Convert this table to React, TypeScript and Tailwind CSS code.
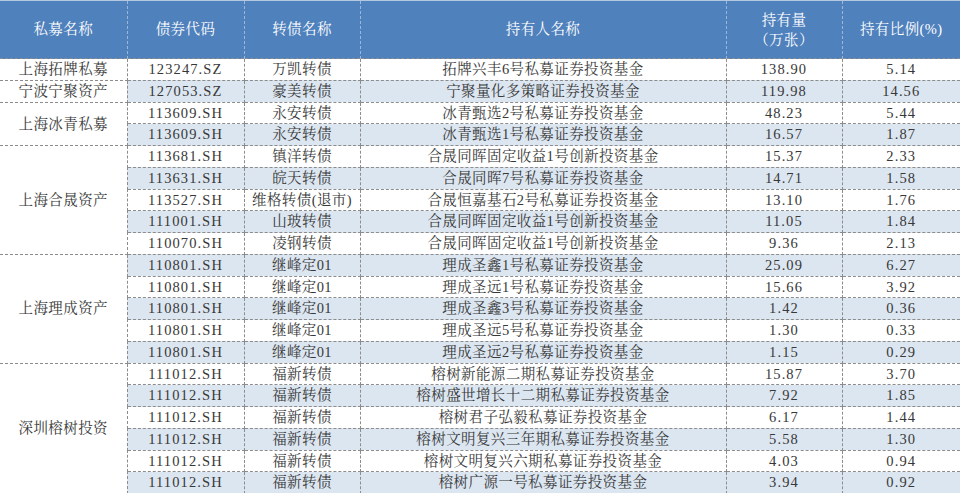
import React from "react";

interface Holding {
  code: string;
  bond: string;
  holder: string;
  amount: string;
  ratio: string;
}

interface Group {
  name: string;
  rows: Holding[];
}

const groups: Group[] = [
  {
    name: "上海拓牌私募",
    rows: [{ code: "123247.SZ", bond: "万凯转债", holder: "拓牌兴丰6号私募证券投资基金", amount: "138.90", ratio: "5.14" }],
  },
  {
    name: "宁波宁聚资产",
    rows: [{ code: "127053.SZ", bond: "豪美转债", holder: "宁聚量化多策略证券投资基金", amount: "119.98", ratio: "14.56" }],
  },
  {
    name: "上海冰青私募",
    rows: [
      { code: "113609.SH", bond: "永安转债", holder: "冰青甄选2号私募证券投资基金", amount: "48.23", ratio: "5.44" },
      { code: "113609.SH", bond: "永安转债", holder: "冰青甄选1号私募证券投资基金", amount: "16.57", ratio: "1.87" },
    ],
  },
  {
    name: "上海合晟资产",
    rows: [
      { code: "113681.SH", bond: "镇洋转债", holder: "合晟同晖固定收益1号创新投资基金", amount: "15.37", ratio: "2.33" },
      { code: "113631.SH", bond: "皖天转债", holder: "合晟同晖7号私募证券投资基金", amount: "14.71", ratio: "1.58" },
      { code: "113527.SH", bond: "维格转债(退市)", holder: "合晟恒嘉基石2号私募证券投资基金", amount: "13.10", ratio: "1.76" },
      { code: "111001.SH", bond: "山玻转债", holder: "合晟同晖固定收益1号创新投资基金", amount: "11.05", ratio: "1.84" },
      { code: "110070.SH", bond: "凌钢转债", holder: "合晟同晖固定收益1号创新投资基金", amount: "9.36", ratio: "2.13" },
    ],
  },
  {
    name: "上海理成资产",
    rows: [
      { code: "110801.SH", bond: "继峰定01", holder: "理成圣鑫1号私募证券投资基金", amount: "25.09", ratio: "6.27" },
      { code: "110801.SH", bond: "继峰定01", holder: "理成圣远1号私募证券投资基金", amount: "15.66", ratio: "3.92" },
      { code: "110801.SH", bond: "继峰定01", holder: "理成圣鑫3号私募证券投资基金", amount: "1.42", ratio: "0.36" },
      { code: "110801.SH", bond: "继峰定01", holder: "理成圣远5号私募证券投资基金", amount: "1.30", ratio: "0.33" },
      { code: "110801.SH", bond: "继峰定01", holder: "理成圣远2号私募证券投资基金", amount: "1.15", ratio: "0.29" },
    ],
  },
  {
    name: "深圳榕树投资",
    rows: [
      { code: "111012.SH", bond: "福新转债", holder: "榕树新能源二期私募证券投资基金", amount: "15.87", ratio: "3.70" },
      { code: "111012.SH", bond: "福新转债", holder: "榕树盛世增长十二期私募证券投资基金", amount: "7.92", ratio: "1.85" },
      { code: "111012.SH", bond: "福新转债", holder: "榕树君子弘毅私募证券投资基金", amount: "6.17", ratio: "1.44" },
      { code: "111012.SH", bond: "福新转债", holder: "榕树文明复兴三年期私募证券投资基金", amount: "5.58", ratio: "1.30" },
      { code: "111012.SH", bond: "福新转债", holder: "榕树文明复兴六期私募证券投资基金", amount: "4.03", ratio: "0.94" },
      { code: "111012.SH", bond: "福新转债", holder: "榕树广源一号私募证券投资基金", amount: "3.94", ratio: "0.92" },
    ],
  },
];

const cell = "border border-dashed border-[#8c8c8c] text-center align-middle p-0 leading-none";
const head = "border-x border-dashed border-x-[#9fb6d6] text-center align-middle font-normal p-0";
// numbers in the reference are set wider (half-width SimSun digits)
const num = "tracking-[1.1px]";

export default function App() {
  let index = 0;

  return (
    <div
      className="w-[960px] h-[493px] overflow-hidden bg-white text-[#383838] text-[14.5px] tracking-[0.4px]"
      style={{ fontFamily: '"Liberation Serif", "Noto Serif CJK SC", "Noto Sans CJK SC", serif' }}
    >
      <table className="w-[960px] table-fixed border-collapse">
        <colgroup>
          <col className="w-[127px]" />
          <col className="w-[117px]" />
          <col className="w-[116px]" />
          <col className="w-[366px]" />
          <col className="w-[116px]" />
          <col className="w-[118px]" />
        </colgroup>
        <thead>
          {/* Header */}
          <tr className="h-[58px] bg-[#4f81bd] text-white border-t border-t-[#b4c7e0]">
            <th className={`${head} border-l-0`}>私募名称</th>
            <th className={head}>债券代码</th>
            <th className={head}>转债名称</th>
            <th className={head}>持有人名称</th>
            <th className={`${head} leading-[20px]`}>
              持有量
              <br />
              （万张）
            </th>
            <th className={`${head} border-r-0`}>持有比例(%)</th>
          </tr>
        </thead>
        <tbody>
          {groups.map((group) =>
            group.rows.map((row, i) => {
              const striped = index++ % 2 === 1;
              const bg = striped ? "bg-[#dce6f1]" : "bg-white";
              return (
                <tr key={`${group.name}-${i}`} className="h-[21.75px]">
                  {i === 0 && (
                    <td rowSpan={group.rows.length} className={`${cell} bg-white border-l-0`}>
                      {group.name}
                    </td>
                  )}
                  <td className={`${cell} ${bg} ${num}`}>{row.code}</td>
                  <td className={`${cell} ${bg}`}>{row.bond}</td>
                  <td className={`${cell} ${bg}`}>{row.holder}</td>
                  <td className={`${cell} ${bg} ${num}`}>{row.amount}</td>
                  <td className={`${cell} ${bg} ${num} border-r-0`}>{row.ratio}</td>
                </tr>
              );
            })
          )}
        </tbody>
      </table>
    </div>
  );
}
